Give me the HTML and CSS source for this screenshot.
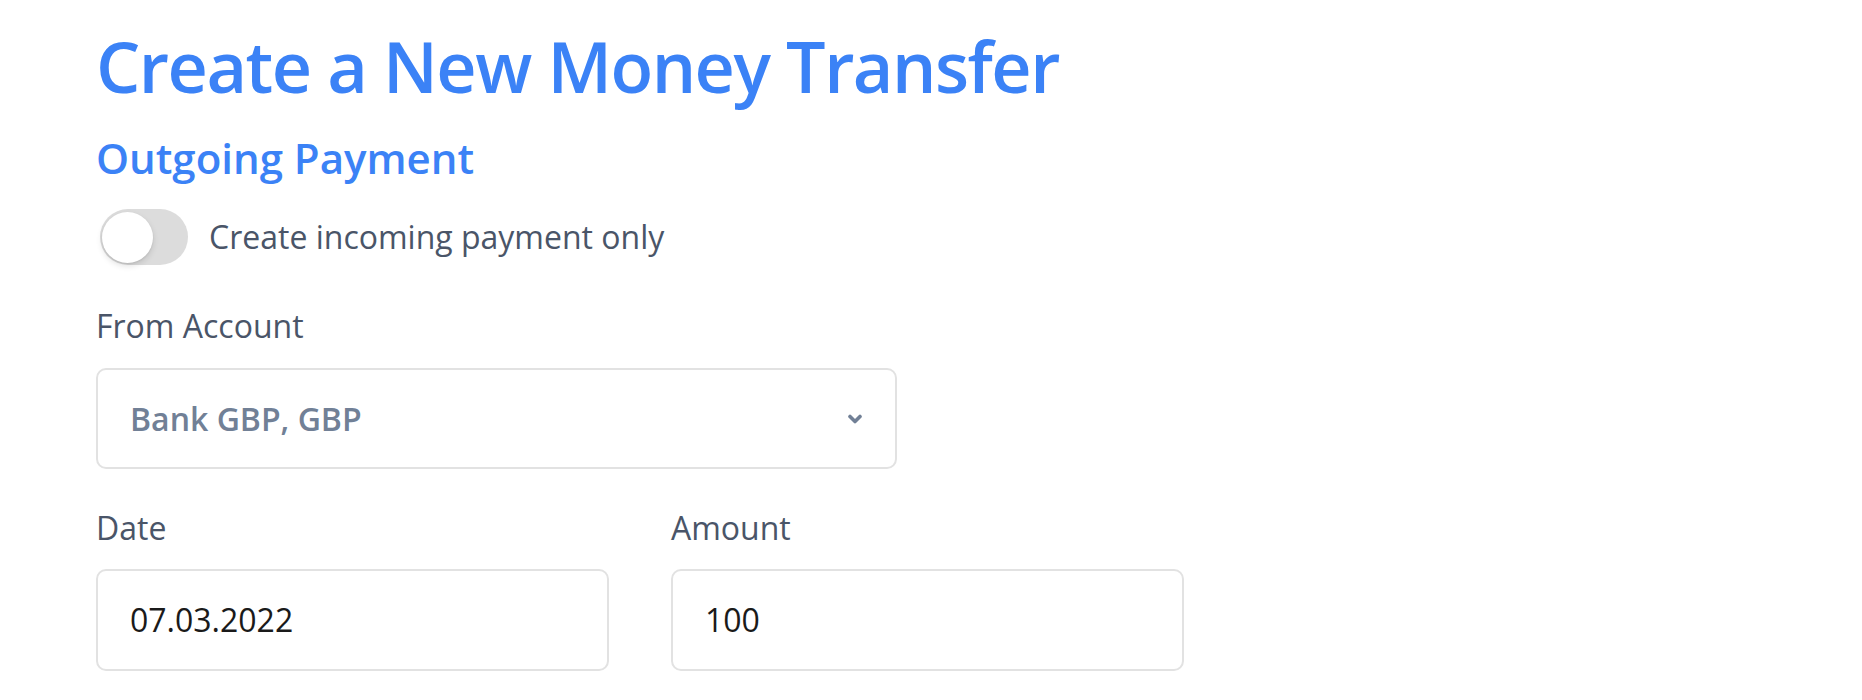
FILE: index.html
```html
<!DOCTYPE html>
<html lang="en">
<head>
<meta charset="utf-8">
<title>Create a New Money Transfer</title>
<link rel="stylesheet" href="styles.css">
</head>
<body>
<main class="page">
  <h1 class="title">Create a New Money Transfer</h1>
  <h2 class="subtitle">Outgoing Payment</h2>
  <label class="toggle-row">
    <span class="toggle"><span class="knob"></span></span>
    <span class="toggle-label">Create incoming payment only</span>
  </label>
  <div class="field account">
    <div class="label">From Account</div>
    <div class="select">
      <span class="select-value">Bank GBP, GBP</span>
      <svg class="chevron" width="14" height="10" viewBox="0 0 14 10" aria-hidden="true"><path d="M2 2.5 L7 7.5 L12 2.5" fill="none" stroke="#718096" stroke-width="3.6" stroke-linecap="round" stroke-linejoin="round"/></svg>
    </div>
  </div>
  <div class="row">
    <div class="field half">
      <div class="label">Date</div>
      <div class="input">07.03.2022</div>
    </div>
    <div class="field half">
      <div class="label">Amount</div>
      <div class="input">100</div>
    </div>
  </div>
</main>
</body>
</html>
```
FILE: styles.css
```css
* { box-sizing: border-box; }
html, body { margin: 0; padding: 0; background: #ffffff; }
body {
  font-family: "Open Sans", "Noto Sans", sans-serif;
  color: #4a5568;
}
.page {
  padding: 31px 0 0 96px;
  display: flex;
  flex-direction: column;
  align-items: flex-start;
}
.title {
  margin: 0;
  font-size: 70px;
  line-height: 1;
  font-weight: 600;
  letter-spacing: -1.5px;
  color: #3b82f6;
}
.subtitle {
  margin: 36px 0 0;
  font-size: 42px;
  line-height: 1;
  font-weight: 600;
  color: #3b82f6;
}
.toggle-row {
  margin-top: 30px;
  display: flex;
  align-items: center;
  gap: 21px;
  padding-left: 4px;
}
.toggle {
  position: relative;
  width: 88px;
  height: 56px;
  border-radius: 28px;
  background: #dcdcdc;
  display: block;
}
.knob {
  position: absolute;
  left: 2px;
  top: 3px;
  width: 51px;
  height: 51px;
  border-radius: 50%;
  background: #ffffff;
  box-shadow: 0 3px 6px rgba(0,0,0,0.12), 0 1px 2px rgba(0,0,0,0.08);
}
.toggle-label {
  font-size: 32px;
  line-height: 1;
  color: #4a5568;
}
.field { display: flex; flex-direction: column; }
.account { margin-top: 45px; }
.label {
  font-size: 32px;
  line-height: 1;
  color: #4a5568;
}
.select {
  margin-top: 26px;
  width: 801px;
  height: 101px;
  border: 2px solid #e2e2e2;
  border-radius: 10px;
  padding: 0 33px 0 32px;
  display: flex;
  align-items: center;
  justify-content: space-between;
}
.select-value {
  font-size: 32px;
  line-height: 1;
  font-weight: 600;
  color: #718096;
}
.row {
  margin-top: 43px;
  display: flex;
  gap: 62px;
}
.half { width: 513px; }
.input {
  margin-top: 25px;
  height: 102px;
  border: 2px solid #e2e2e2;
  border-radius: 10px;
  padding: 0 32px;
  display: flex;
  align-items: center;
  font-size: 32px;
  line-height: 1;
  color: #1a1a1a;
}
```
